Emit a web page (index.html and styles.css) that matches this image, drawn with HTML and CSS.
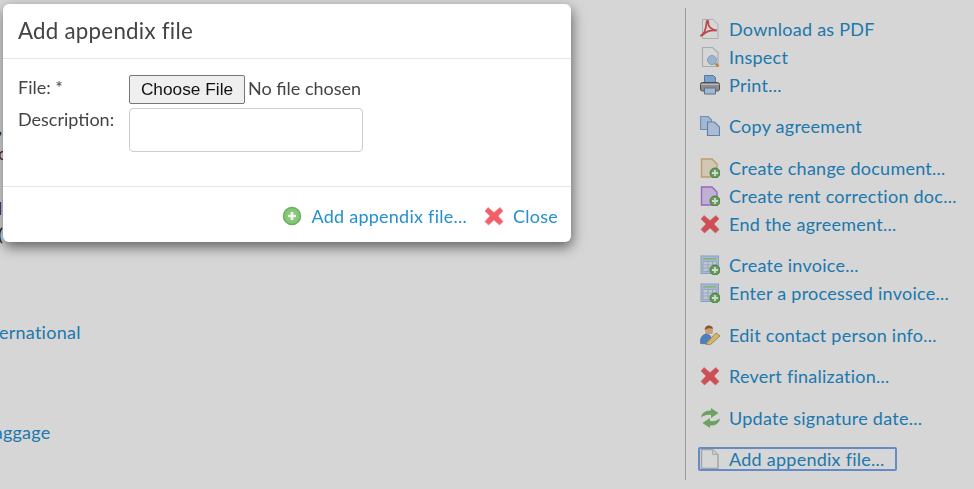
FILE: index.html
```html
<!DOCTYPE html>
<html lang="en">

<head>
    <meta charset="UTF-8">
    <meta name="viewport" content="width=device-width, initial-scale=1.0">
    <title>Add appendix file</title>
    <link rel="stylesheet" href="styles.css">
</head>

<body>
    <svg class="sprite" width="0" height="0" aria-hidden="true">
        <symbol id="plus-badge" viewBox="0 0 20 20">
            <circle cx="15" cy="15" r="5" fill="#78bd6c" stroke="#4f9a4c"/>
            <path d="M15 12v6M12 15h6" stroke="#ffffff" stroke-width="1.800"/>
        </symbol>
        <symbol id="cross" viewBox="0 0 20 20">
            <path d="M4 1.500 10 6.500 16 1.500 19 5 14 10 19 15.500 15.500 19 10 14 4.500 19 1 15.500 6 10 1 5z" fill="#f25f66" stroke="#f7868b" stroke-width=".8" stroke-linejoin="round"/>
        </symbol>
        <symbol id="ledger" viewBox="0 0 20 20">
            <rect x="1" y="1" width="17.500" height="17.500" fill="#c9dcf8" stroke="#a3bfe6"/>
            <path d="M3 3.800h13.500" stroke="#9fd58f" stroke-width="1.500"/>
            <path d="M3 6.500h13.500v10H3zM3 10h13.500M3 13h13.500M8 6.500v10M12.500 6.500v10" fill="#e4edfa" stroke="#a9bfe0" stroke-width=".8"/>
        </symbol>
    </svg>

    <main class="content">
        <div class="peek">
            <span class="peek-line">,</span>
            <span class="peek-line peek-red">o</span>
            <span class="peek-line peek-red peek-gap">l</span>
            <span class="peek-line">(</span>
        </div>
        <a class="clipped first" href="#">International</a>
        <a class="clipped second" href="#">Baggage</a>
    </main>

    <aside class="sidebar">
        <ul class="actions">
            <li>
                <svg class="icon" viewBox="0 0 20 20">
                    <path d="M2.500.5h11l4.500 5v14H2.500z" fill="#ffffff" stroke="#cfcfcf"/>
                    <path d="M1 16.500c3-1.500 5-6.500 5.500-12.500.2-3 2-3 1.800 0-.2 3 2.500 7 8.500 7.500-4-.5-9.500.5-12.500 3-1.500 1.500-3 2.500-3.300 2z" fill="none" stroke="#e0575c" stroke-width="1.800"/>
                </svg>
                <a href="#">Download as PDF</a>
            </li>
            <li>
                <svg class="icon" viewBox="0 0 20 20">
                    <path d="M2.500.5h10l5.500 5v14H2.500z" fill="#ffffff" stroke="#cccccc" stroke-width="1.200"/>
                    <circle cx="12" cy="13" r="4.500" fill="#b8d6fa" stroke="#9dbfe8"/>
                    <path d="M15.500 16.500 18.500 19.500" stroke="#e0a35a" stroke-width="2.500"/>
                </svg>
                <a href="#">Inspect</a>
            </li>
            <li>
                <svg class="icon" viewBox="0 0 20 20">
                    <path d="M4.500 8V.5h9l2 2V8z" fill="#96c0f5" stroke="#5f8fcc"/>
                    <rect x=".5" y="7.500" width="19" height="8.500" rx="2" fill="#a8a8a8" stroke="#5c5c5c"/>
                    <path d="M1 9.500h18" stroke="#dddddd"/>
                    <path d="M4.500 13h11v6h-11z" fill="#c5dcf8" stroke="#6a88ab"/>
                </svg>
                <a href="#">Print...</a>
            </li>
        </ul>

        <ul class="actions">
            <li>
                <svg class="icon" viewBox="0 0 20 20">
                    <path d="M.5.500h7.500l3.500 3.500v9.500H.5z" fill="#c5d9f7" stroke="#83a9e0" stroke-width="1.200"/>
                    <path d="M7.500 6h7l5 5v8.500h-12z" fill="#cfe0fa" stroke="#6f9cd8" stroke-width="1.200"/>
                </svg>
                <a href="#">Copy agreement</a>
            </li>
        </ul>

        <ul class="actions">
            <li>
                <svg class="icon" viewBox="0 0 20 20">
                    <path d="M1.500 1h10.500l5 5v13H1.500z" fill="#fbeed6" stroke="#e2bd80" stroke-width="1.400"/>
                    <use href="#plus-badge"/>
                </svg>
                <a href="#">Create change document...</a>
            </li>
            <li>
                <svg class="icon" viewBox="0 0 20 20">
                    <path d="M1.500 1h10.500l5 5v13H1.500z" fill="#e6d2fa" stroke="#b37ee0" stroke-width="1.400"/>
                    <use href="#plus-badge"/>
                </svg>
                <a href="#">Create rent correction doc...</a>
            </li>
            <li>
                <svg class="icon" viewBox="0 0 20 20"><use href="#cross"/></svg>
                <a href="#">End the agreement...</a>
            </li>
        </ul>

        <ul class="actions">
            <li>
                <svg class="icon" viewBox="0 0 20 20"><use href="#ledger"/><use href="#plus-badge"/></svg>
                <a href="#">Create invoice...</a>
            </li>
            <li>
                <svg class="icon" viewBox="0 0 20 20"><use href="#ledger"/><use href="#plus-badge"/></svg>
                <a href="#">Enter a processed invoice...</a>
            </li>
        </ul>

        <ul class="actions">
            <li>
                <svg class="icon" viewBox="0 0 20 20">
                    <path d="M5 5a4.500 4.500 0 0 1 8 0l-.5 4h-7z" fill="#f0bd90"/>
                    <path d="M4.500 5C5 1.500 7 0 9.500.5c2.200.2 3.500 2 3.500 3.500-2.500-1-5.500-1-8.500 1z" fill="#a8622f"/>
                    <path d="M.5 18.500c-.5-4.500 1-8.500 5.500-9.500l3.500 1 2 3-3 6z" fill="#5f97e0" stroke="#4878b8" stroke-width=".6"/>
                    <path d="m7 17.500 9-9.500 4 3-9.500 8.500-4 .5z" fill="#f7d98a" stroke="#c29a4c" stroke-width=".9"/>
                </svg>
                <a href="#">Edit contact person info...</a>
            </li>
        </ul>

        <ul class="actions">
            <li>
                <svg class="icon" viewBox="0 0 20 20"><use href="#cross"/></svg>
                <a href="#">Revert finalization...</a>
            </li>
        </ul>

        <ul class="actions">
            <li>
                <svg class="icon icon-wide" viewBox="0 0 20 20">
                    <path d="M.5 9.500C1 5 5 2 10.500 2.500V0l7.500 5-7.500 5V7C6.500 6.500 3.500 7.500.5 9.500z" fill="#84c176"/>
                    <path d="M19.500 10.500C19 15 15 18 9.500 17.500V20L2 15l7.500-5v3c4 .5 7-.5 10-2.500z" fill="#84c176"/>
                </svg>
                <a href="#">Update signature date...</a>
            </li>
        </ul>

        <ul class="actions">
            <li class="focused">
                <svg class="icon" viewBox="0 0 20 20">
                    <path d="M1.500.5h11l5.500 5v14H1.500z" fill="#ffffff" stroke="#c4c4c4" stroke-width="1.400"/>
                    <path d="M12.500.5v5h5.500" fill="#eeeeee" stroke="#cfcfcf"/>
                </svg>
                <a href="#">Add appendix file...</a>
            </li>
        </ul>
    </aside>

    <div class="backdrop"></div>

    <div class="modal">
        <h2 class="modal-title">Add appendix file</h2>
        <form class="modal-body">
            <label for="file">File: *</label>
            <input type="file" id="file" name="file">
            <label class="label-description" for="description">Description:</label>
            <textarea id="description" name="description"></textarea>
        </form>
        <div class="modal-footer">
            <a href="#">
                <svg class="icon" viewBox="0 0 20 20">
                    <circle cx="10" cy="10" r="8.500" fill="#86c877" stroke="#6cab62" stroke-width="1.500"/>
                    <path d="M10 6v8M6 10h8" stroke="#f2f8f0" stroke-width="2.600"/>
                </svg>
                Add appendix file...
            </a>
            <a href="#">
                <svg class="icon" viewBox="0 0 20 20"><use href="#cross"/></svg>
                Close
            </a>
        </div>
    </div>
</body>

</html>
```

FILE: styles.css
```css
body {
    margin: 0;
    height: 100vh;
    display: flex;
    overflow: hidden;
    background-color: #ffffff;
    font-family: "Lato", sans-serif;
    font-size: 18px;
    letter-spacing: 0.25px;
    color: #444444;
}

a {
    color: #2590d0;
    text-decoration: none;
}

.sprite {
    position: absolute;
}

.icon {
    width: 20px;
    height: 20px;
    flex-shrink: 0;
}

/* page behind the dialog */
.content {
    flex: 1;
    min-width: 0;
    overflow: hidden;
    display: flex;
    flex-direction: column;
    align-items: flex-start;
}

.peek {
    display: flex;
    flex-direction: column;
    margin: 114px 0 0 -2px;
    line-height: 26px;
    color: #222222;
}

.peek-red {
    color: #7a1f2a;
}

.peek-gap {
    margin-top: 29px;
}

.clipped {
    margin-left: -23px;
    line-height: 24px;
}

.first {
    margin-top: 73px;
}

.second {
    margin-top: 76px;
    margin-left: -18px;
}

.sidebar {
    width: 276px;
    flex-shrink: 0;
    margin: 8px 0 9px;
    padding: 7px 0 0 12px;
    border-left: 1px solid #b8b8b8;
    white-space: nowrap;
    overflow: hidden;
}

.actions {
    list-style: none;
    margin: 0 0 13.450px;
    padding: 0;
}

.actions li {
    display: flex;
    align-items: center;
    gap: 9px;
    height: 28px;
    padding-left: 2px;
}

.actions .focused {
    width: 195px;
    height: 19px;
    margin: 15px 0 0;
    padding: 1px 0 0;
    border: 2px solid #78a6ee;
    border-radius: 2px;
}

.icon-wide {
    width: 21px;
    margin-right: -1px;
}

.backdrop {
    position: fixed;
    top: 0;
    left: 0;
    width: 100%;
    height: 100%;
    background-color: rgba(0, 0, 0, 0.16);
}

.modal {
    position: absolute;
    top: 4px;
    left: 3px;
    width: 568px;
    height: 238px;
    display: flex;
    flex-direction: column;
    background-color: #ffffff;
    border-radius: 6px;
    box-shadow: 1px 5px 13px rgba(0, 0, 0, 0.55);
}

.modal-title {
    margin: 0;
    padding: 15px;
    height: 24px;
    line-height: 24px;
    font-size: 22.300px;
    font-weight: 400;
    border-bottom: 1px solid #e5e5e5;
}

.modal-body {
    flex: 1;
    display: grid;
    grid-template-columns: 111px 1fr;
    grid-template-rows: 29px 44px;
    row-gap: 4px;
    align-content: start;
    padding: 16px 15px 0;
}

.modal-body label {
    line-height: 24px;
    letter-spacing: 0;
}

.modal-body .label-description {
    margin-top: -1px;
}

.modal-body input[type="file"] {
    font-family: "Lato", sans-serif;
    font-size: 18px;
    letter-spacing: 0;
    color: #444444;
}

.modal-body input[type="file"]::file-selector-button {
    width: 116px;
    height: 29px;
    margin-right: 3px;
    padding: 0;
    font-family: "Liberation Sans", sans-serif;
    font-size: 17.300px;
    color: #111111;
    background-color: #efefef;
    border: 1px solid #767676;
    border-radius: 2px;
}

.modal-body textarea {
    box-sizing: border-box;
    width: 234px;
    height: 44px;
    border: 1px solid #cccccc;
    border-radius: 4px;
    resize: none;
}

.modal-footer {
    height: 53px;
    display: flex;
    justify-content: flex-end;
    align-items: center;
    gap: 17px;
    padding: 2px 13px 0 0;
    border-top: 1px solid #e5e5e5;
}

.modal-footer a {
    display: flex;
    align-items: center;
    gap: 9px;
}
```
